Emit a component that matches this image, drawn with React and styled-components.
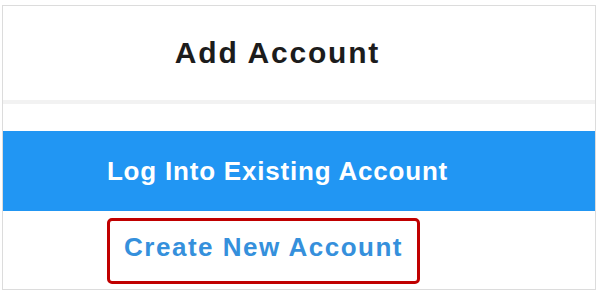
import React from "react";
import styled, { createGlobalStyle } from "styled-components";

const Global = createGlobalStyle`
  html, body { margin: 0; padding: 0; background: #ffffff; }
  body { font-family: "Liberation Sans", Arial, sans-serif; }
`;

const Card = styled.div`
  box-sizing: border-box;
  margin: 5px 0 0 2px;
  width: 594px;
  height: 285px;
  border: 1px solid #dcdcdc;
  display: flex;
  flex-direction: column;
  background: #fff;
`;

const Header = styled.div`
  height: 94px;
  display: flex;
  align-items: center;
  justify-content: center;
  padding-right: 43px;
`;

const Title = styled.h1`
  margin: 0;
  font-size: 30px;
  font-weight: 700;
  letter-spacing: 1.8px;
  color: #1c1c1c;
`;

const Divider = styled.div`
  height: 4px;
  background: #f2f2f2;
`;

const Spacer = styled.div`
  height: 27px;
`;

const PrimaryRow = styled.button`
  height: 80px;
  border: 0;
  margin: 0;
  background: #2196f3;
  display: flex;
  align-items: center;
  justify-content: center;
  padding: 0 43px 0 0;
  font-family: inherit;
  font-size: 26px;
  font-weight: 700;
  letter-spacing: 0.8px;
  color: #ffffff;
`;

const BottomRow = styled.div`
  flex: 1;
  display: flex;
  align-items: flex-start;
  padding: 7px 0 0 104px;
`;

const Highlight = styled.div`
  box-sizing: border-box;
  width: 313px;
  height: 66px;
  border: 3px solid #c00000;
  border-radius: 5px;
  display: flex;
  align-items: center;
  justify-content: center;
  padding-bottom: 8px;
`;

const LinkText = styled.a`
  font-size: 26px;
  font-weight: 700;
  letter-spacing: 1.5px;
  color: #3590dc;
  text-decoration: none;
`;

export default function App() {
  return (
    <>
      <Global />
      <Card>
        <Header>
          <Title>Add Account</Title>
        </Header>
        <Divider />
        <Spacer />
        <PrimaryRow>Log Into Existing Account</PrimaryRow>
        <BottomRow>
          <Highlight>
            <LinkText href="#">Create New Account</LinkText>
          </Highlight>
        </BottomRow>
      </Card>
    </>
  );
}
